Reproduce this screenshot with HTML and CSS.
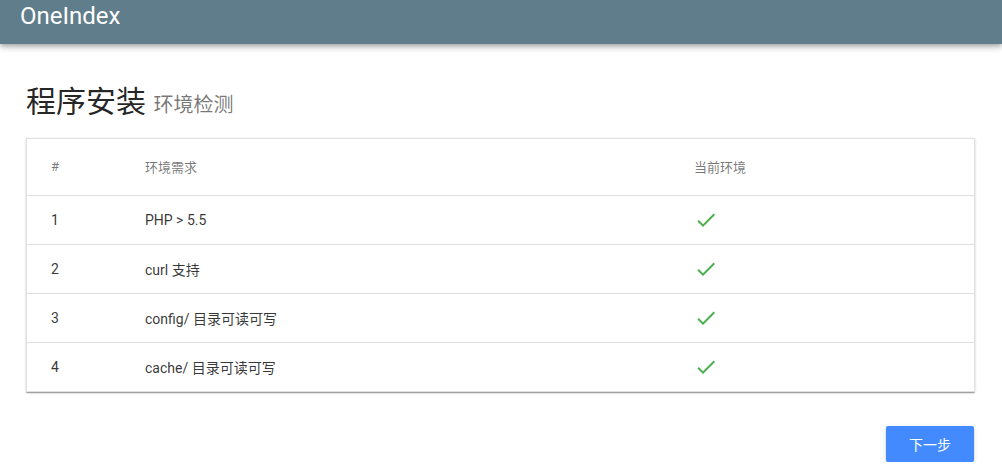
FILE: index.html
```html
<!DOCTYPE html>
<html lang="zh-CN">
<head>
<meta charset="utf-8">
<title>OneIndex</title>
<link rel="stylesheet" href="styles.css">
</head>
<body>
<header class="appbar">
  <div class="appbar-title">OneIndex</div>
</header>
<main class="container">
  <h1 class="page-title">程序安装 <small class="page-sub">环境检测</small></h1>
  <div class="table-card">
    <table class="req-table">
      <thead>
        <tr><th class="c1">#</th><th class="c2">环境需求</th><th class="c3">当前环境</th></tr>
      </thead>
      <tbody>
        <tr><td class="c1">1</td><td class="c2">PHP &gt; 5.5</td><td class="c3"><svg class="ok" viewBox="0 0 24 24" width="24" height="24"><path d="M9 16.17L4.83 12l-1.42 1.41L9 19 21 7l-1.41-1.41z"/></svg></td></tr>
        <tr><td class="c1">2</td><td class="c2">curl 支持</td><td class="c3"><svg class="ok" viewBox="0 0 24 24" width="24" height="24"><path d="M9 16.17L4.83 12l-1.42 1.41L9 19 21 7l-1.41-1.41z"/></svg></td></tr>
        <tr><td class="c1">3</td><td class="c2">config/ 目录可读可写</td><td class="c3"><svg class="ok" viewBox="0 0 24 24" width="24" height="24"><path d="M9 16.17L4.83 12l-1.42 1.41L9 19 21 7l-1.41-1.41z"/></svg></td></tr>
        <tr><td class="c1">4</td><td class="c2">cache/ 目录可读可写</td><td class="c3"><svg class="ok" viewBox="0 0 24 24" width="24" height="24"><path d="M9 16.17L4.83 12l-1.42 1.41L9 19 21 7l-1.41-1.41z"/></svg></td></tr>
      </tbody>
    </table>
  </div>
  <div class="actions">
    <button class="btn-next" type="button">下一步</button>
  </div>
</main>
</body>
</html>
```
FILE: styles.css
```css
* { box-sizing: border-box; }
html, body { margin: 0; padding: 0; background: #fff; }
body {
  font-family: Roboto, "Noto Sans CJK SC", "Noto Sans", sans-serif;
  color: rgba(0,0,0,.8);
}
.appbar {
  height: 44px;
  background: #607d8b;
  box-shadow: 0 2px 4px -1px rgba(0,0,0,.2), 0 4px 5px 0 rgba(0,0,0,.14), 0 1px 10px 0 rgba(0,0,0,.12);
  padding-left: 20px;
}
.appbar-title {
  color: #fff;
  font-size: 24px;
  line-height: 32px;
}
.container {
  padding: 0 27px 0 26px;
}
.page-title {
  margin: 38px 0 13px;
  font-size: 30px;
  font-weight: 400;
  line-height: 40px;
  color: rgba(0,0,0,.87);
}
.page-sub {
  font-size: 20px;
  color: rgba(0,0,0,.54);
}
.table-card {
  border: 1px solid rgba(0,0,0,.12);
  box-shadow: 0 2px 1px -1px rgba(0,0,0,.2), 0 1px 1px 0 rgba(0,0,0,.14), 0 1px 3px 0 rgba(0,0,0,.12);
  background: #fff;
}
.req-table {
  width: 100%;
  border-collapse: collapse;
  border-spacing: 0;
  table-layout: fixed;
}
.req-table th {
  height: 56px;
  font-size: 13px;
  font-weight: 400;
  color: rgba(0,0,0,.54);
  text-align: left;
  padding: 0;
}
.req-table td {
  height: 49px;
  font-size: 14px;
  text-align: left;
  padding: 0;
  border-top: 1px solid rgba(0,0,0,.12);
  vertical-align: middle;
}
.req-table .c1 { width: 118px; padding-left: 24px; }
.req-table .c2 { width: 549px; }
.ok { display: block; fill: #4caf50; }
.actions {
  display: flex;
  justify-content: flex-end;
  margin-top: 34px;
  padding-right: 1px;
}
.btn-next {
  width: 88px;
  height: 36px;
  border: none;
  border-radius: 2px;
  background: #448aff;
  color: #fff;
  font-family: Roboto, "Noto Sans CJK SC", sans-serif;
  font-size: 14px;
  box-shadow: 0 3px 1px -2px rgba(0,0,0,.2), 0 2px 2px 0 rgba(0,0,0,.14), 0 1px 5px 0 rgba(0,0,0,.12);
}
```
